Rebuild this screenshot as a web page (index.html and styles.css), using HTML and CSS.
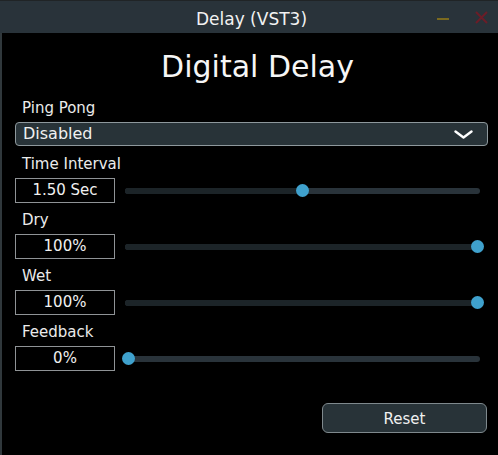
FILE: index.html
```html
<!DOCTYPE html>
<html>
<head>
<meta charset="utf-8">
<title>Delay (VST3)</title>
<link rel="stylesheet" href="styles.css">
</head>
<body>
<div class="window">
  <header class="titlebar">
    <div class="spacer"></div>
    <div class="title">Delay (VST3)</div>
    <div class="controls">
      <span class="min"></span>
      <svg class="close" width="13" height="13" viewBox="0 0 13 13"><path d="M1 1 L12 12 M12 1 L1 12" stroke="#6b1d28" stroke-width="2" fill="none"/></svg>
    </div>
  </header>
  <main class="content">
    <h1 class="heading">Digital Delay</h1>
    <div class="field first">
      <div class="label">Ping Pong</div>
      <div class="combo">
        <span class="combo-text">Disabled</span>
        <svg class="chevron" width="19" height="9" viewBox="0 0 19 9"><polyline points="1.5,1.5 9.5,7.5 17.5,1.5" stroke="#ffffff" stroke-width="2.4" fill="none" stroke-linecap="round" stroke-linejoin="round"/></svg>
      </div>
    </div>
    <div class="field param">
      <div class="label">Time Interval</div>
      <div class="row">
        <div class="value">1.50 Sec</div>
        <div class="slider"><div class="rail" style="--v:0.5"><div class="fill"></div><div class="thumb"></div></div></div>
      </div>
    </div>
    <div class="field param">
      <div class="label">Dry</div>
      <div class="row">
        <div class="value">100%</div>
        <div class="slider"><div class="rail" style="--v:1"><div class="fill"></div><div class="thumb"></div></div></div>
      </div>
    </div>
    <div class="field param">
      <div class="label">Wet</div>
      <div class="row">
        <div class="value">100%</div>
        <div class="slider"><div class="rail" style="--v:1"><div class="fill"></div><div class="thumb"></div></div></div>
      </div>
    </div>
    <div class="field param">
      <div class="label">Feedback</div>
      <div class="row">
        <div class="value">0%</div>
        <div class="slider"><div class="rail" style="--v:0"><div class="fill"></div><div class="thumb"></div></div></div>
      </div>
    </div>
    <div class="footer">
      <button class="reset">Reset</button>
    </div>
  </main>
</div>
</body>
</html>
```

FILE: styles.css
```css
html, body {
  margin: 0;
  padding: 0;
  background: #000;
}
body {
  width: 498px;
  height: 455px;
  overflow: hidden;
  font-family: "DejaVu Sans", "Liberation Sans", sans-serif;
  color: #ececec;
}
.window {
  width: 498px;
  height: 455px;
  display: flex;
  flex-direction: column;
}
.titlebar {
  height: 28px;
  padding-top: 4px;
  border-top: 1px solid #202426;
  background: #29333a;
  display: grid;
  grid-template-columns: 1fr auto 1fr;
  align-items: start;
}
.title {
  font-size: 17px;
  line-height: 28px;
  padding-left: 5px;
  color: #f2f2f2;
}
.controls {
  display: flex;
  justify-content: flex-end;
  align-items: center;
  height: 24px;
  padding-right: 10px;
  gap: 26px;
}
.min {
  display: block;
  width: 12px;
  height: 2px;
  background: #7b6a1f;
  margin-top: 3px;
}
.close {
  display: block;
  margin-top: 1px;
}
.content {
  flex: 1;
  border-left: 2px solid #30383c;
  padding: 16px 10px 0 13px;
  display: flex;
  flex-direction: column;
}
.heading {
  margin: 0;
  font-weight: normal;
  font-size: 30px;
  line-height: 36px;
  text-align: center;
  padding-left: 12px;
  color: #f6f6f6;
}
.field {
  display: flex;
  flex-direction: column;
}
.field.first {
  margin-top: 14px;
}
.field.param {
  margin-top: 9px;
}
.field.param + .field.param {
  margin-top: 8px;
}
.label {
  font-size: 15px;
  line-height: 18px;
  height: 18px;
  padding-left: 7px;
  margin-bottom: 5px;
  color: #ebebeb;
}
.combo {
  height: 22px;
  border: 1px solid #8e989c;
  border-radius: 4px;
  background: #283338;
  display: flex;
  align-items: center;
  justify-content: space-between;
  padding: 0 14px 0 7px;
}
.combo-text {
  font-size: 16px;
  line-height: 22px;
  color: #f0f0f0;
}
.chevron {
  display: block;
}
.row {
  display: flex;
  align-items: center;
  height: 25px;
}
.value {
  box-sizing: border-box;
  width: 100px;
  height: 25px;
  border: 1px solid #8f9396;
  background: #000;
  font-size: 15px;
  line-height: 23px;
  text-align: center;
  color: #f0f0f0;
}
.slider {
  flex: 1;
  margin-left: 10px;
  margin-right: 8px;
  display: flex;
  align-items: center;
  height: 25px;
}
.rail {
  position: relative;
  width: 100%;
  height: 6px;
  border-radius: 3px;
  background: #29333a;
}
.fill {
  position: absolute;
  left: 0;
  top: 0;
  bottom: 0;
  width: calc(3px + (100% - 6px) * var(--v));
  border-radius: 3px;
  background: #1c2428;
}
.thumb {
  position: absolute;
  top: 50%;
  left: calc(3px + (100% - 6px) * var(--v));
  width: 13px;
  height: 13px;
  margin: -6.5px 0 0 -6.5px;
  border-radius: 50%;
  background: #3fa1cd;
}
.footer {
  display: flex;
  justify-content: flex-end;
  margin-top: 32px;
  padding-right: 1px;
}
.reset {
  box-sizing: border-box;
  width: 165px;
  height: 30px;
  border: 1px solid #7f898d;
  border-radius: 6px;
  background: #283338;
  color: #f0f0f0;
  font-family: "DejaVu Sans", "Liberation Sans", sans-serif;
  font-size: 15px;
  line-height: 26px;
  padding: 2px 0 0 0;
}
```
